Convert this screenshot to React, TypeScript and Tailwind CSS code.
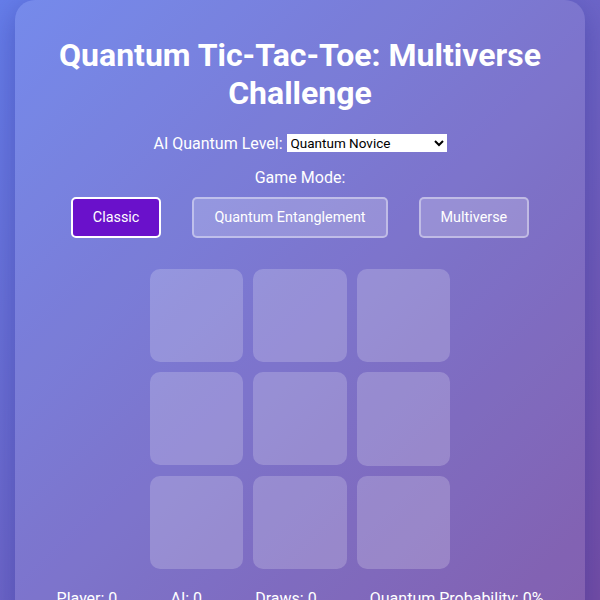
import { useState } from 'react'

// ============================================
// Quantum Tic-Tac-Toe: Multiverse Challenge
// ============================================

type Mode = 'classic' | 'entangle' | 'multiverse'

const MODES: Array<{ value: Mode; label: string }> = [
  { value: 'classic', label: 'Classic' },
  { value: 'entangle', label: 'Quantum Entanglement' },
  { value: 'multiverse', label: 'Multiverse' },
]

const LEVELS = ['Quantum Novice', 'Quantum Adept', 'Quantum Master']

export default function App() {
  const [mode, setMode] = useState<Mode>('classic')
  const [level, setLevel] = useState(LEVELS[0])
  const [board, setBoard] = useState<Array<string | null>>(Array(9).fill(null))

  const play = (i: number) => {
    if (board[i]) return
    const next = [...board]
    next[i] = 'X'
    setBoard(next)
  }

  return (
    <div
      className="min-h-screen bg-[linear-gradient(135deg,#667eea_0%,#764ba2_100%)] px-[15px] pb-[30px] text-white"
      style={{ fontFamily: 'Roboto, "Liberation Sans", sans-serif' }}
    >
      <div className="rounded-[20px] bg-white/10 px-[15px] pt-[36px] pb-[30px] text-center shadow-[0_8px_32px_rgba(31,38,135,0.37)]">
        {/* Title */}
        <h1 className="mx-auto max-w-[510px] text-[32px] font-bold leading-[38.4px]">
          Quantum Tic-Tac-Toe: Multiverse Challenge
        </h1>

        {/* AI level */}
        <div className="mt-[21px] flex items-center justify-center gap-[4px] text-[16px] leading-[19px]">
          <label htmlFor="level">AI Quantum Level:</label>
          <select
            id="level"
            value={level}
            onChange={e => setLevel(e.target.value)}
            className="h-[18px] w-[160px] bg-white text-[13.5px] text-black"
          >
            {LEVELS.map(l => (
              <option key={l}>{l}</option>
            ))}
          </select>
        </div>

        {/* Game mode */}
        <div className="mt-[15px] text-[16px] leading-[19px]">Game Mode:</div>
        <div className="mt-[10px] flex justify-center gap-[31px]">
          {MODES.map(m => (
            <button
              key={m.value}
              onClick={() => setMode(m.value)}
              className={
                mode === m.value
                  ? 'rounded-[5px] border-2 border-white bg-[#6a11cb] px-[20px] py-[10px] text-[14.4px] leading-[17px] text-white'
                  : 'rounded-[5px] border-2 border-white/40 bg-white/20 px-[20px] py-[10px] text-[14.4px] leading-[17px] text-white'
              }
            >
              {m.label}
            </button>
          ))}
        </div>

        {/* Board */}
        <div className="mx-auto mt-[31px] grid w-[300px] grid-cols-3 gap-[10px]">
          {board.map((cell, i) => (
            <button
              key={i}
              onClick={() => play(i)}
              className="aspect-square rounded-[10px] bg-white/20 text-[40px] font-bold"
            >
              {cell}
            </button>
          ))}
        </div>

        {/* Stats */}
        <div className="mt-[20px] flex justify-around text-[16px] leading-[19px]">
          <span>Player: 0</span>
          <span>AI: 0</span>
          <span>Draws: 0</span>
          <span>Quantum Probability: 0%</span>
        </div>
      </div>
    </div>
  )
}
